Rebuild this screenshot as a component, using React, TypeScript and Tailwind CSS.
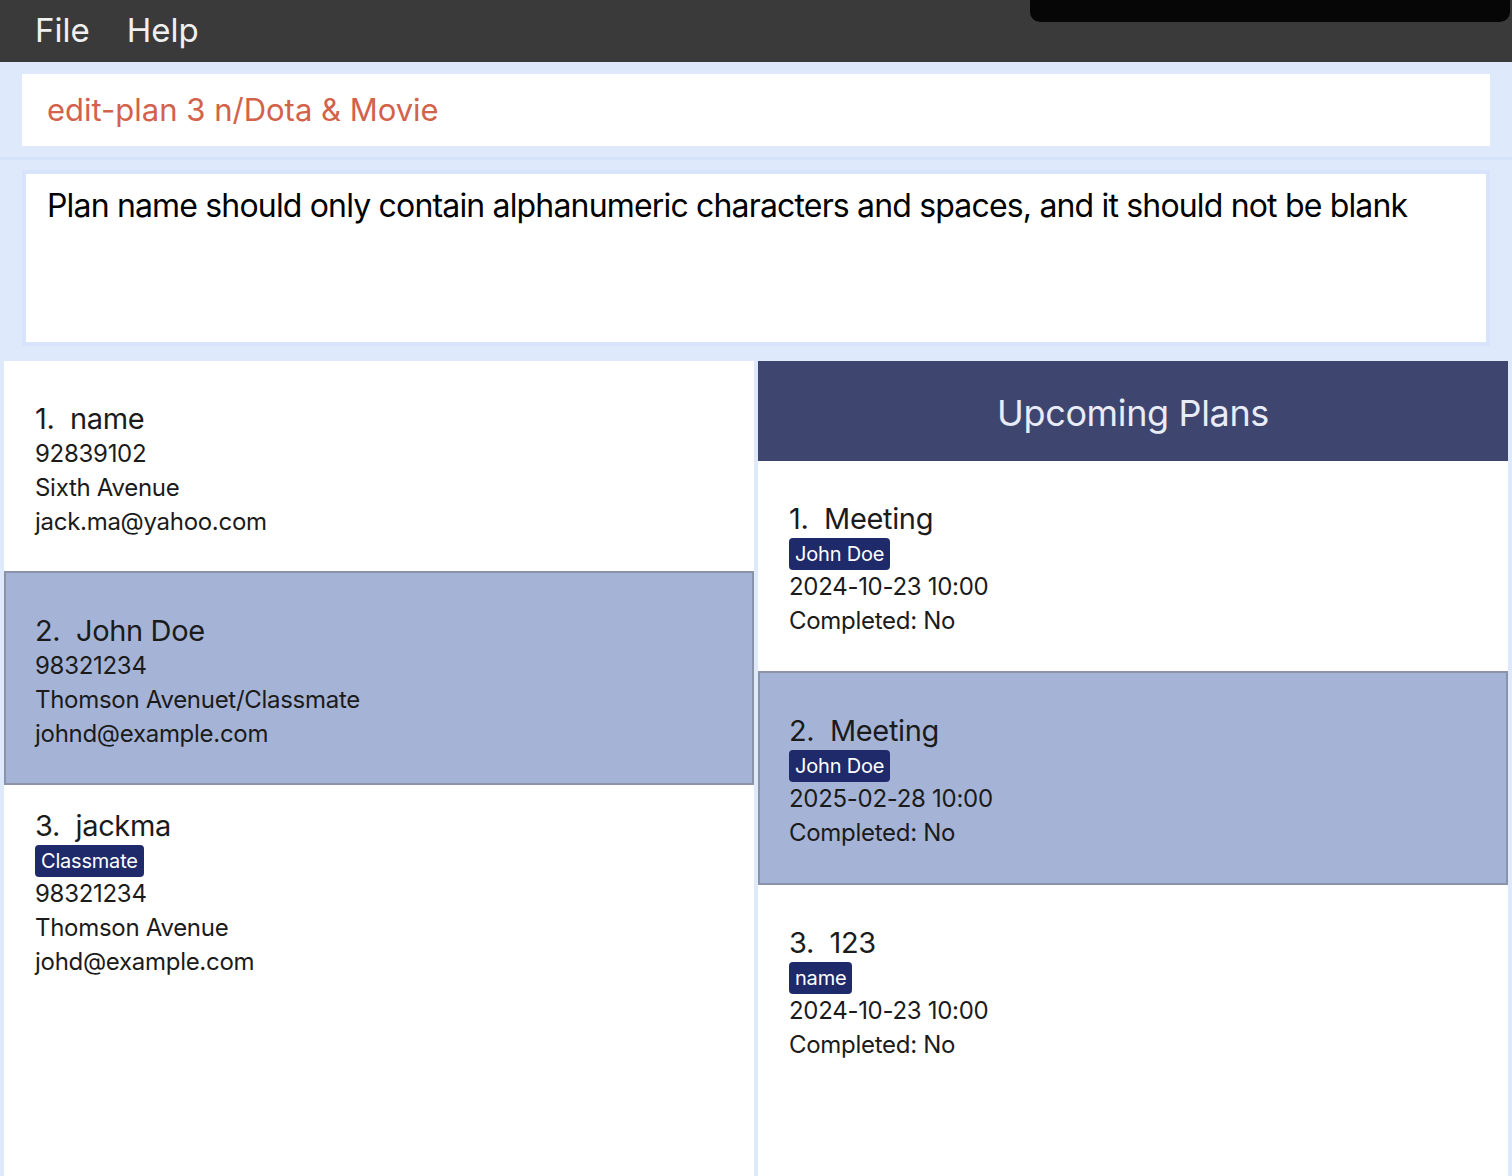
import React from 'react';

type Person = { name: string; phone: string; address: string; email: string; tags: string[] };
type Plan = { name: string; who: string; date: string; done: boolean };

const people: Person[] = [
  { name: 'name', phone: '92839102', address: 'Sixth Avenue', email: 'jack.ma@yahoo.com', tags: [] },
  {
    name: 'John Doe',
    phone: '98321234',
    address: 'Thomson Avenuet/Classmate',
    email: 'johnd@example.com',
    tags: [],
  },
  { name: 'jackma', phone: '98321234', address: 'Thomson Avenue', email: 'johd@example.com', tags: ['Classmate'] },
];

const plans: Plan[] = [
  { name: 'Meeting', who: 'John Doe', date: '2024-10-23 10:00', done: false },
  { name: 'Meeting', who: 'John Doe', date: '2025-02-28 10:00', done: false },
  { name: '123', who: 'name', date: '2024-10-23 10:00', done: false },
];

function Tag({ label }: { label: string }) {
  return (
    <span className="self-start mt-[1px] h-[32px] flex items-center px-[6px] rounded-[4px] bg-[#1f2a6b] text-white text-[20px] tracking-[-0.01em]">
      {label}
    </span>
  );
}

function Cell({ selected, children }: { selected: boolean; children: React.ReactNode }) {
  return (
    <div
      className={`flex flex-col justify-center pt-[6px] ${
        selected ? 'h-[214px] pl-[29px] border-2 border-[#8a93a8] bg-[#a5b4d6]' : 'h-[210px] pl-[31px] bg-white'
      }`}
    >
      {children}
    </div>
  );
}

const line = 'text-[24px] leading-[34px] tracking-[-0.012em]';
const title = 'text-[29px] leading-[37px] tracking-[-0.012em] whitespace-pre';

export default function App() {
  return (
    <div
      className="relative w-[1512px] h-[1176px] overflow-hidden flex flex-col bg-[#dfe9fc] text-[#1b1b1b]"
      style={{ fontFamily: 'Inter, "Noto Sans", sans-serif' }}
    >
      {/* menu bar */}
      <div className="h-[62px] shrink-0 bg-[#3a3a3a] flex items-center gap-[37px] pl-[35px] text-[33px] text-[#f0f0f0]">
        <span>File</span>
        <span>Help</span>
      </div>
      <div className="absolute left-[1030px] top-0 w-[480px] h-[22px] rounded-b-[10px] bg-[#060606]" />

      {/* command box */}
      <div className="shrink-0 px-[22px] pt-[12px] pb-[11px] border-b-[3px] border-[#d5e2f9]">
        <div className="h-[72px] bg-white flex items-center pl-[25px] text-[31px] text-[#d3624b]">
          edit-plan 3 n/Dota &amp; Movie
        </div>
      </div>

      {/* result box */}
      <div className="shrink-0 px-[22px] pt-[10px] pb-[15px]">
        <div className="h-[176px] border-4 border-[#d8e4fb] bg-white pl-[21px] pt-[12px] text-[32px] leading-[40px] tracking-[-0.026em] text-black">
          Plan name should only contain alphanumeric characters and spaces, and it should not be blank
        </div>
      </div>

      {/* lists */}
      <div className="flex-1 flex gap-[4px] px-[4px] min-h-0">
        <div className="w-[750px] bg-white flex flex-col">
          {people.map((p, i) => (
            <Cell key={i} selected={i === 1}>
              <div className={title}>{`${i + 1}.  ${p.name}`}</div>
              {p.tags.map((t) => (
                <Tag key={t} label={t} />
              ))}
              <div className={line}>{p.phone}</div>
              <div className={line}>{p.address}</div>
              <div className={line}>{p.email}</div>
            </Cell>
          ))}
        </div>
        <div className="w-[750px] bg-white flex flex-col">
          <div className="h-[100px] shrink-0 pt-[3px] bg-[#3e4670] flex items-center justify-center text-[36px] tracking-[-0.01em] text-[#e8ecf6]">
            Upcoming Plans
          </div>
          {plans.map((p, i) => (
            <Cell key={i} selected={i === 1}>
              <div className={title}>{`${i + 1}.  ${p.name}`}</div>
              <Tag label={p.who} />
              <div className={line}>{p.date}</div>
              <div className={line}>Completed: {p.done ? 'Yes' : 'No'}</div>
            </Cell>
          ))}
        </div>
      </div>
    </div>
  );
}
